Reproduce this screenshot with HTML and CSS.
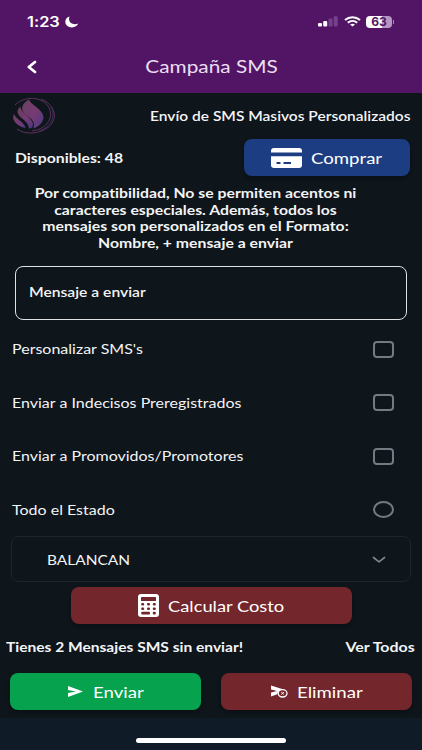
FILE: index.html
```
<!doctype html>
<html lang="es">
  <head>
    <meta charset="utf-8">
    <meta name="viewport" content="width=device-width, initial-scale=1.0">
    <title>Campaña SMS</title>
    <link rel="stylesheet" href="styles.css">
  </head>
  <body>
    <header class="header">
      <div class="status-bar">
        <span class="clock"><span class="label">1:23</span></span>
        <svg class="moon" width="14" height="12" viewBox="0 0 14 12"><path d="M4.6 0.6C1.8 1.4 0.3 3.4 0.3 5.8C0.3 9.1 3.2 11.4 7 11.4C9.9 11.4 12.3 9.9 13.3 7.6C10.8 8.6 7.4 8.4 5.5 6.6C3.8 5 3.7 2.5 4.6 0.6Z" fill="#fff"/></svg>
        <svg class="signal" width="20" height="11" viewBox="0 0 20 11">
          <rect x="0" y="7" width="4" height="3.6" rx="1" fill="#fff"/>
          <rect x="5.2" y="5" width="4" height="5.6" rx="1" fill="#fff"/>
          <rect x="10.5" y="2.6" width="4" height="8" rx="1" fill="#74418a"/>
          <rect x="15.7" y="0.3" width="4" height="10.3" rx="1" fill="#74418a"/>
        </svg>
        <svg class="wifi" width="17" height="11" viewBox="0 0 17 11" fill="none" stroke="#fff" stroke-width="2">
          <path d="M1 3.9C5.2 0.2 11.8 0.2 16 3.9"/>
          <path d="M3.8 6.7C6.5 4.4 10.5 4.4 13.2 6.7"/>
          <path d="M8.5 10.6L6 8.5Q8.5 6.9 11 8.5Z" fill="#fff" stroke="none"/>
        </svg>
        <span class="battery">63</span>
        <span class="battery-tip"></span>
      </div>
      <div class="title-bar">
        <svg class="back" width="10" height="14" viewBox="0 0 10 14"><path d="M8 2L1.8 7L8 12" fill="none" stroke="#fff" stroke-width="2.7" stroke-linecap="round" stroke-linejoin="round"/></svg>
        <h1 class="title"><span class="label">Campaña SMS</span></h1>
      </div>
    </header>

    <main class="content">
      <div class="intro">
        <svg class="logo" width="44" height="38" viewBox="0 0 44 38">
          <defs>
            <linearGradient id="flame" x1="0" y1="0" x2="1" y2="1">
              <stop offset="0" stop-color="#68415f"/>
              <stop offset="0.55" stop-color="#763a74"/>
              <stop offset="1" stop-color="#493b80"/>
            </linearGradient>
          </defs>
          <g fill="url(#flame)">
            <path d="M17 2.5C18.5 8 31 12 31.5 20C31.5 25.5 27 29.5 21 31.5C24 26 20 22 14 18C7.5 13 9.5 6.5 17 2.5Z"/>
            <path d="M8.5 9.5C8 16 20 20 21 27C21 30 19.5 31.5 17 31.5C17 27 13 24 9 20.5C4.5 16.5 4.5 12.5 8.5 9.5Z"/>
            <path d="M2 16.5C2.5 21.5 13 25 13.5 31C7.5 30 1.5 25.5 1 20.5Z"/>
          </g>
          <g fill="none" stroke="#643363" stroke-width="0.9">
            <path d="M3 8C12 -1 29 -1 36 9C43 20 35 32 20 34"/>
            <path d="M29 2C44 8 47 23 35 31C27 37 13 38 5 32"/>
            <path d="M39 10C44 19 39 30 27 34" stroke="#413260"/>
          </g>
        </svg>
        <p class="strong subtitle"><span class="label">Envío de SMS Masivos Personalizados</span></p>
      </div>

      <div class="credits">
        <p class="bold available"><span class="label">Disponibles: 48</span></p>
        <button class="button buy">
          <svg width="31" height="20" viewBox="0 0 31 20">
            <path d="M3 0H28Q31 0 31 3V4.5H0V3Q0 0 3 0Z" fill="#fff"/>
            <path d="M0 8.3H31V17Q31 20 28 20H3Q0 20 0 17Z" fill="#fff"/>
            <path d="M5.5 15H9.5M12.5 15H20" stroke="#1c3d82" stroke-width="1.8"/>
          </svg>
          <span class="label">Comprar</span>
        </button>
      </div>

      <p class="bold notice">
        <span class="label">Por compatibilidad, No se permiten acentos ni<br>caracteres especiales. Además, todos los<br>mensajes son personalizados en el Formato:<br>Nombre, + mensaje a enviar</span>
      </p>

      <div class="message strong"><span class="label">Mensaje a enviar</span></div>

      <div class="option"><span class="label">Personalizar SMS's</span><span class="check"></span></div>
      <div class="option"><span class="label">Enviar a Indecisos Preregistrados</span><span class="check"></span></div>
      <div class="option"><span class="label">Enviar a Promovidos/Promotores</span><span class="check"></span></div>
      <div class="option"><span class="label">Todo el Estado</span><span class="check radio"></span></div>

      <div class="select">
        <span class="label">BALANCAN</span>
        <svg width="14" height="8" viewBox="0 0 14 8"><path d="M1.5 1.5L7 5.8L12.5 1.5" fill="none" stroke="#7d848d" stroke-width="1.7" stroke-linecap="round" stroke-linejoin="round"/></svg>
      </div>

      <button class="button calculate">
        <svg width="21" height="23" viewBox="0 0 21 23">
          <rect width="21" height="23" rx="3" fill="#fff"/>
          <g fill="#73262b">
            <rect x="3" y="3" width="15" height="4" rx="0.5"/>
            <rect x="3.2" y="9" width="3" height="2.6" rx="1"/><rect x="9" y="9" width="3" height="2.6" rx="1"/><rect x="14.8" y="9" width="3" height="2.6" rx="1"/>
            <rect x="3.2" y="13.4" width="3" height="2.6" rx="1"/><rect x="9" y="13.4" width="3" height="2.6" rx="1"/><rect x="14.8" y="13.4" width="3" height="2.6" rx="1"/>
            <rect x="3.2" y="17.8" width="8.8" height="2.6" rx="1"/><rect x="14.8" y="17.8" width="3" height="2.6" rx="1"/>
          </g>
        </svg>
        <span class="label">Calcular Costo</span>
      </button>

      <div class="pending bold">
        <span class="label">Tienes 2 Mensajes SMS sin enviar!</span>
        <span class="label all">Ver Todos</span>
      </div>

      <div class="actions">
        <button class="button send">
          <svg width="15" height="11" viewBox="0 0 15 11"><path d="M0 0L15 5.5L0 11V7L8 5.5L0 4Z" fill="#fff"/></svg>
          <span class="label">Enviar</span>
        </button>
        <button class="button delete">
          <svg width="17" height="13" viewBox="0 0 17 13">
            <path d="M0 0.5L12 4.2Q7 5 6.2 9.2L0 11.5V7.5L6 6L0 4.5Z" fill="#fff"/>
            <ellipse cx="11.6" cy="8.3" rx="4.4" ry="3.7" fill="none" stroke="#fff" stroke-width="1.3"/>
            <path d="M10.2 7.1L13 9.5M13 7.1L10.2 9.5" stroke="#fff" stroke-width="0.9"/>
          </svg>
          <span class="label">Eliminar</span>
        </button>
      </div>
    </main>

    <footer class="footer"><span class="home-bar"></span></footer>
  </body>
</html>
```
FILE: styles.css
```
* {
  box-sizing: border-box;
}

body {
  margin: 0;
  height: 750px;
  display: flex;
  flex-direction: column;
  background: #0e151b;
  color: #f3f4f6;
  font-family: Lato, "Open Sans", sans-serif;
  font-size: 13.5px;
  font-variant-ligatures: none;
  overflow: hidden;
}

p,
h1 {
  margin: 0;
}

svg {
  display: block;
  flex: none;
}

/* wide lettering */
.label {
  display: inline-block;
  white-space: nowrap;
  transform: scaleX(var(--wide, 1.18));
  transform-origin: left center;
}

.strong {
  font-weight: 600;
}

.bold {
  font-weight: 700;
}

.header {
  height: 93px;
  background: #521566;
  color: #fff;
}

.status-bar {
  display: flex;
  align-items: center;
  height: 43px;
  padding: 0 28px 0 27px;
}

.clock {
  --wide: 1.13;
  width: 38px;
  font-family: Inter, sans-serif;
  font-size: 14.5px;
  font-weight: 600;
}

.signal {
  margin-left: auto;
}

.wifi {
  margin: 0 5px 0 6px;
}

.battery {
  width: 26px;
  height: 12px;
  border-radius: 4px;
  background: linear-gradient(90deg, #fff 63%, #b797c2 63%);
  color: #521566;
  font: 700 12px/12px Inter, sans-serif;
  text-align: center;
}

.battery-tip {
  width: 1px;
  height: 4px;
  margin-left: 1px;
  background: #a98ab3;
}

.title-bar {
  display: flex;
  align-items: center;
  height: 48px;
  padding: 0 27px;
}

.title {
  --wide: 1.26;
  flex: 1;
  margin-right: 9px;
  text-align: center;
  color: #eadff0;
  font-size: 16.5px;
  font-weight: 400;
}

.title .label,
.notice .label {
  transform-origin: center;
}

.content {
  flex: 1;
  display: flex;
  flex-direction: column;
}

.intro {
  display: flex;
  align-items: center;
  justify-content: space-between;
  height: 46px;
  padding: 0 12px;
}

.subtitle {
  --wide: 1.15;
}

.subtitle .label,
.all {
  transform-origin: right center;
}

.credits {
  display: flex;
  align-items: center;
  justify-content: space-between;
  height: 37px;
  padding: 0 12px 0 15px;
}

.available {
  --wide: 1.167;
}

.button {
  --wide: 1.24;
  display: flex;
  align-items: center;
  height: 37px;
  padding: 0;
  border: 0;
  border-radius: 8px;
  background: #73262b;
  box-shadow: 0 2px 4px rgba(0, 0, 0, 0.3);
  color: #fff;
  font-family: inherit;
  font-size: 15px;
}

.buy {
  width: 166px;
  padding-left: 27px;
  gap: 9px;
  background: #1c3d82;
}

.notice {
  --wide: 1.17;
  width: 390px;
  margin-top: 9px;
  text-align: center;
  line-height: 16.7px;
}

.message {
  --wide: 1.16;
  display: flex;
  align-items: center;
  height: 54px;
  margin: 14px 15px 2px;
  padding: 0 0 1px 13px;
  border: 1px solid #dfe1e3;
  border-radius: 8px;
}

.option {
  --wide: 1.185;
  display: flex;
  align-items: center;
  justify-content: space-between;
  height: 53.6px;
  padding: 1px 28px 0 12px;
}

.check {
  width: 21px;
  height: 17px;
  border: 2px solid #737a83;
  border-radius: 4px;
}

.radio {
  border-radius: 50%;
}

.select {
  --wide: 1.145;
  display: flex;
  align-items: center;
  justify-content: space-between;
  height: 46px;
  margin: 0 11px;
  padding: 1px 24px 0 35px;
  border: 1px solid #1e252f;
  border-radius: 8px;
}

.calculate {
  --wide: 1.22;
  width: 281px;
  margin: 5px 0 0 71px;
  padding-left: 67px;
  gap: 9px;
}

.pending {
  --wide: 1.152;
  display: flex;
  align-items: center;
  justify-content: space-between;
  height: 45px;
  padding: 0 7px 0 6px;
}

.all {
  --wide: 1.18;
}

.actions {
  display: flex;
  justify-content: space-between;
  margin-top: 4px;
  padding: 0 10px;
}

.actions .button {
  width: 191px;
}

.actions .send {
  padding-left: 58px;
  gap: 10px;
  background: #06a24d;
}

.actions .delete {
  padding-left: 50px;
  gap: 9px;
}

.footer {
  display: flex;
  justify-content: center;
  height: 32px;
  padding-top: 20px;
  background: #101b28;
}

.home-bar {
  width: 150px;
  height: 5px;
  border-radius: 3px;
  background: #fff;
}
```
